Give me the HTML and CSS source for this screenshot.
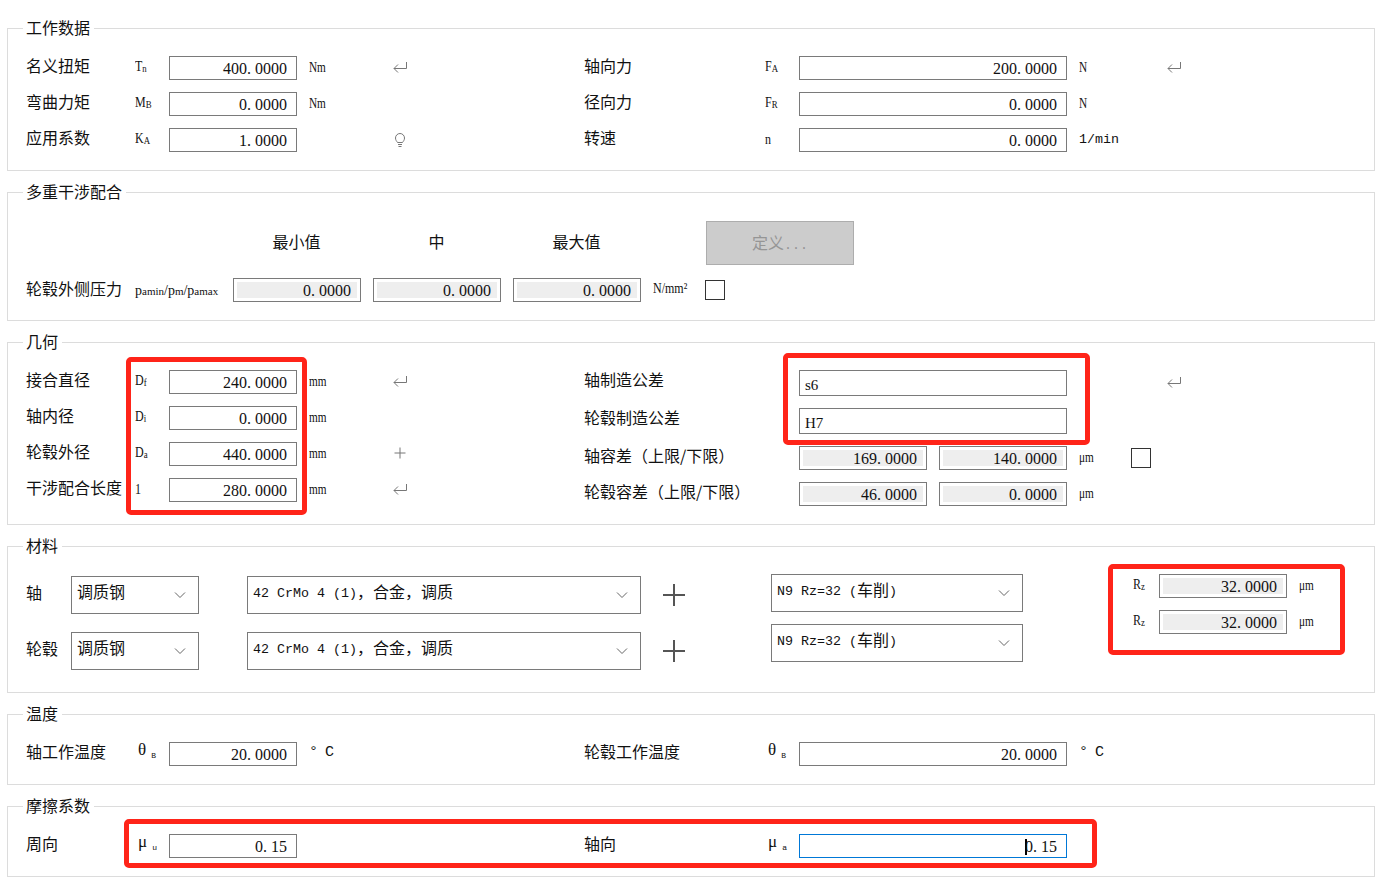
FILE: index.html
```html
<!DOCTYPE html>
<html lang="zh-CN">
<head>
<meta charset="utf-8">
<title>工作数据</title>
<link rel="stylesheet" href="styles.css">
</head>
<body>
<main class="page">

<section class="group">
  <h2 class="legend">工作数据</h2>
  <div class="cols">
    <div class="col-left">
      <div class="row-l"><span class="lbl">名义扭矩</span><span class="sym">T<small>n</small></span><div class="field">400<i>.</i>0000</div><span class="unit">Nm</span><svg class="ico" viewBox="0 0 14 12"><path d="M13.5 1v6.500H1M5 3.500l-4 4 4 4"/></svg></div>
      <div class="row-l"><span class="lbl">弯曲力矩</span><span class="sym">M<small>B</small></span><div class="field">0<i>.</i>0000</div><span class="unit">Nm</span></div>
      <div class="row-l"><span class="lbl">应用系数</span><span class="sym">K<small>A</small></span><div class="field">1<i>.</i>0000</div><span class="unit"></span><svg class="ico bulb" viewBox="0 0 14 16"><path d="M4.500 10.500C3.500 9 2.500 8 2.500 6a4.500 4.500 0 0 1 9 0c0 2-1 3-2 4.500zM5 12.500h4M5.500 14.500h3"/></svg></div>
    </div>
    <div class="col-right">
      <div class="row-r"><span class="lbl">轴向力</span><span class="sym">F<small>A</small></span><div class="field">200<i>.</i>0000</div><span class="unit">N</span><span></span><svg class="ico" viewBox="0 0 14 12"><path d="M13.5 1v6.500H1M5 3.500l-4 4 4 4"/></svg></div>
      <div class="row-r"><span class="lbl">径向力</span><span class="sym">F<small>R</small></span><div class="field">0<i>.</i>0000</div><span class="unit">N</span></div>
      <div class="row-r"><span class="lbl">转速</span><span class="sym">n</span><div class="field">0<i>.</i>0000</div><span class="unit mono">1/min</span></div>
    </div>
  </div>
</section>

<section class="group">
  <h2 class="legend">多重干涉配合</h2>
  <div class="press">
    <span></span>
    <span class="head">最小值</span>
    <span class="head">中</span>
    <span class="head">最大值</span>
    <span></span>
    <button class="define" type="button">定义<span class="mono">...</span></button>
    <span class="lbl press-lbl">轮毂外侧压力<span class="press-sym">p<small>amin</small>/p<small>m</small>/p<small>amax</small></span></span>
    <div class="field ro">0<i>.</i>0000</div>
    <div class="field ro">0<i>.</i>0000</div>
    <div class="field ro">0<i>.</i>0000</div>
    <span class="unit-plain">N/mm²</span>
    <span class="check"></span>
  </div>
</section>

<section class="group">
  <h2 class="legend">几何</h2>
  <div class="cols">
    <div class="col-left">
      <div class="row-l"><span class="lbl">接合直径</span><span class="sym">D<small>f</small></span><div class="field">240<i>.</i>0000</div><span class="unit">mm</span><svg class="ico" viewBox="0 0 14 12"><path d="M13.5 1v6.500H1M5 3.500l-4 4 4 4"/></svg></div>
      <div class="row-l"><span class="lbl">轴内径</span><span class="sym">D<small>i</small></span><div class="field">0<i>.</i>0000</div><span class="unit">mm</span></div>
      <div class="row-l"><span class="lbl">轮毂外径</span><span class="sym">D<small>a</small></span><div class="field">440<i>.</i>0000</div><span class="unit">mm</span><svg class="ico" viewBox="0 0 14 12"><path d="M7 .5v11M1.500 6h11"/></svg></div>
      <div class="row-l"><span class="lbl">干涉配合长度</span><span class="sym">1</span><div class="field">280<i>.</i>0000</div><span class="unit">mm</span><svg class="ico" viewBox="0 0 14 12"><path d="M13.5 1v6.500H1M5 3.500l-4 4 4 4"/></svg></div>
    </div>
    <div class="col-right">
      <div class="row-r tall"><span class="lbl">轴制造公差</span><span></span><div class="field left">s6</div><span></span><span></span><svg class="ico" viewBox="0 0 14 12"><path d="M13.5 1v6.500H1M5 3.500l-4 4 4 4"/></svg></div>
      <div class="row-r tall"><span class="lbl">轮毂制造公差</span><span></span><div class="field left">H7</div></div>
      <div class="row-r"><span class="lbl">轴容差（上限/下限）</span><span></span><div class="pair"><div class="field ro">169<i>.</i>0000</div><div class="field ro">140<i>.</i>0000</div></div><span class="unit">μm</span><span class="check"></span></div>
      <div class="row-r"><span class="lbl">轮毂容差（上限/下限）</span><span></span><div class="pair"><div class="field ro">46<i>.</i>0000</div><div class="field ro">0<i>.</i>0000</div></div><span class="unit">μm</span></div>
    </div>
  </div>
</section>

<section class="group group-mat">
  <h2 class="legend">材料</h2>
  <div class="mat">
    <div class="mat-main">
      <div class="mat-row">
        <span class="lbl">轴</span>
        <div class="select">调质钢<svg class="chev" viewBox="0 0 12 8"><path d="M1 1.500l5 5 5-5"/></svg></div>
        <div class="select select-grade"><span class="mono">42 CrMo 4 (1)</span>，合金，调质<svg class="chev" viewBox="0 0 12 8"><path d="M1 1.500l5 5 5-5"/></svg></div>
        <svg class="plus" viewBox="0 0 22 22"><path d="M11 0v22M0 11h22"/></svg>
      </div>
      <div class="mat-row">
        <span class="lbl">轮毂</span>
        <div class="select">调质钢<svg class="chev" viewBox="0 0 12 8"><path d="M1 1.500l5 5 5-5"/></svg></div>
        <div class="select select-grade"><span class="mono">42 CrMo 4 (1)</span>，合金，调质<svg class="chev" viewBox="0 0 12 8"><path d="M1 1.500l5 5 5-5"/></svg></div>
        <svg class="plus" viewBox="0 0 22 22"><path d="M11 0v22M0 11h22"/></svg>
      </div>
    </div>
    <div class="mat-rough">
      <div class="select"><span class="mono">N9 Rz=32 (</span>车削<span class="mono">)</span><svg class="chev" viewBox="0 0 12 8"><path d="M1 1.500l5 5 5-5"/></svg></div>
      <div class="select"><span class="mono">N9 Rz=32 (</span>车削<span class="mono">)</span><svg class="chev" viewBox="0 0 12 8"><path d="M1 1.500l5 5 5-5"/></svg></div>
    </div>
    <div class="mat-rz">
      <div class="rz-row"><span class="sym">R<small>z</small></span><div class="field ro">32<i>.</i>0000</div><span class="unit">μm</span></div>
      <div class="rz-row"><span class="sym">R<small>z</small></span><div class="field ro">32<i>.</i>0000</div><span class="unit">μm</span></div>
    </div>
  </div>
</section>

<section class="group">
  <h2 class="legend">温度</h2>
  <div class="cols">
    <div class="col-left">
      <div class="row-l"><span class="lbl">轴工作温度</span><span class="greek">θ<small>B</small></span><div class="field">20<i>.</i>0000</div><span class="unit temp">° C</span></div>
    </div>
    <div class="col-right">
      <div class="row-r"><span class="lbl">轮毂工作温度</span><span class="greek">θ<small>B</small></span><div class="field">20<i>.</i>0000</div><span class="unit temp">° C</span></div>
    </div>
  </div>
</section>

<section class="group">
  <h2 class="legend">摩擦系数</h2>
  <div class="cols">
    <div class="col-left">
      <div class="row-l"><span class="lbl">周向</span><span class="greek">μ<small>u</small></span><div class="field">0<i>.</i>15</div></div>
    </div>
    <div class="col-right">
      <div class="row-r"><span class="lbl">轴向</span><span class="greek">μ<small>a</small></span><div class="field focus"><span class="caret"></span>0<i>.</i>15</div></div>
    </div>
  </div>
</section>

<div class="mark mark-a"></div>
<div class="mark mark-b"></div>
<div class="mark mark-c"></div>
<div class="mark mark-d"></div>
</main>
</body>
</html>
```
FILE: styles.css
```css
* { box-sizing: border-box; }
html, body { margin: 0; background: #fff; }
body { font-family: "Noto Sans CJK SC", "Liberation Sans", sans-serif; font-size: 16px; color: #111; overflow: hidden; }
.page { position: relative; width: 1386px; height: 894px; padding: 28px 11px 0 7px; }

.group { border: 1px solid #dcdcdc; margin-bottom: 21px; padding: 0 0 18px 19px; }
.group-mat { padding-bottom: 22px; }
.legend { width: fit-content; margin: -11px 0 18px -4px; padding: 0 4px 2px 3px; height: 20px; background: #fff; font-size: 16px; font-weight: 400; line-height: 18px; }

.cols { display: flex; }
.col-left { width: 558px; display: flex; flex-direction: column; gap: 12px; }
.col-right { flex: 1; display: flex; flex-direction: column; gap: 12px; }
.row-l { display: grid; grid-template-columns: 108px 34px 128px 96px 20px; grid-template-rows: 24px; align-items: center; height: 24px; }
.row-r { display: grid; grid-template-columns: 180px 34px 268px 64px 36px 20px; grid-template-rows: 24px; align-items: center; height: 24px; }
.row-r.tall { grid-template-rows: 26px; height: 26px; }

.lbl { margin-left: -1px; line-height: 20px; padding-bottom: 6px; white-space: nowrap; }
.tall .lbl { padding-bottom: 8px; }
.sym { font-family: "Liberation Serif", serif; font-size: 15px; line-height: 20px; padding-bottom: 2px; white-space: nowrap; transform: scaleX(.8); transform-origin: left center; }
.sym small { font-size: 11px; vertical-align: -1px; }
.greek { padding: 0 0 3px 3px; font-family: "Liberation Serif", serif; font-size: 17px; line-height: 20px; white-space: nowrap; }
.greek small { margin-left: 5px; vertical-align: -3px; font-family: "Liberation Mono", monospace; font-size: 8px; }

.field { height: 24px; border: 1px solid #7a7a7a; background: #fff; padding: 0 9px 0 0; text-align: right; font-family: "Liberation Serif", serif; font-size: 16px; line-height: 24px; white-space: nowrap; }
.field i { padding-right: 4px; font-style: normal; }
.tall .field { height: 26px; line-height: 28px; }
.field.left { text-align: left; padding: 0 0 0 5px; font-size: 15px; }
.field.ro { background: #eee; box-shadow: inset 0 0 0 3px #fff; }
.field.focus { border-color: #0078d7; }
.caret { display: inline-block; width: 2px; height: 16px; margin-right: -2px; vertical-align: -3px; background: #000; }

.unit { margin-left: 12px; padding-bottom: 2px; font-family: "Liberation Serif", serif; font-size: 15px; line-height: 20px; white-space: nowrap; transform: scaleX(.75); transform-origin: left center; }
.unit.mono { padding-bottom: 0; font-family: "Liberation Mono", monospace; font-size: 13.33px; transform: none; }
.unit.temp { padding-bottom: 3px; font-family: "Liberation Mono", monospace; font-size: 15px; letter-spacing: -1px; transform: none; }
.ico { width: 14px; height: 12px; margin-top: -2px; fill: none; stroke: #777; stroke-width: 1; }
.bulb { height: 16px; margin-top: 0; }

.press { display: grid; grid-template-columns: 194px 128px 128px 128px 40px 20px; grid-template-rows: 44px 24px; column-gap: 12px; row-gap: 13px; align-items: center; margin-top: 19px; }
.head { margin-left: -1px; padding-bottom: 5px; text-align: center; }
.press-lbl { display: flex; align-items: center; padding-bottom: 4px; }
.press-sym { margin-left: 13px; padding-top: 6px; font-family: "Liberation Serif", serif; font-size: 14px; }
.press-sym small { font-size: 11px; }
.define { width: 148px; height: 44px; margin-left: 1px; padding: 0 0 2px; border: 1px solid #adadad; background: #ccc; font: inherit; color: #959595; }
.unit-plain { padding-bottom: 4px; font-family: "Liberation Serif", serif; font-size: 15px; white-space: nowrap; transform: scaleX(.8); transform-origin: left center; }
.check { display: block; width: 20px; height: 20px; border: 1px solid #333; background: #fff; }

.pair { display: grid; grid-template-columns: 128px 128px; gap: 12px; }

.mat { display: flex; }
.mat-main { width: 744px; padding-top: 2px; display: flex; flex-direction: column; gap: 18px; }
.mat-row { display: grid; grid-template-columns: 44px 128px 48px 394px 22px 22px; grid-template-rows: 38px; align-items: center; height: 38px; }
.select-grade { grid-column: 4; }
.mat-row .plus { grid-column: 6; width: 22px; height: 22px; fill: none; stroke: #555; stroke-width: 2; }
.mat-rough { width: 252px; display: flex; flex-direction: column; gap: 12px; }
.select { position: relative; height: 38px; border: 1px solid #7a7a7a; padding: 4px 0 0 5px; line-height: 20px; white-space: nowrap; }
.mono { font-family: "Liberation Mono", monospace; font-size: 13.33px; }
.select .mono { vertical-align: 1px; }
.chev { position: absolute; right: 12px; top: 14px; width: 12px; height: 8px; fill: none; stroke: #666; stroke-width: 1; }
.mat-rz { margin-left: 110px; display: flex; flex-direction: column; gap: 12px; }
.rz-row { display: grid; grid-template-columns: 26px 128px auto; grid-template-rows: 24px; align-items: center; height: 24px; }

.mark { position: absolute; border: 5px solid #ff2419; border-radius: 5px; }
.mark-a { left: 126px; top: 357px; width: 181px; height: 158px; }
.mark-b { left: 783px; top: 353px; width: 307px; height: 92px; }
.mark-c { left: 1108px; top: 564px; width: 237px; height: 91px; }
.mark-d { left: 124px; top: 819px; width: 973px; height: 49px; }
```
